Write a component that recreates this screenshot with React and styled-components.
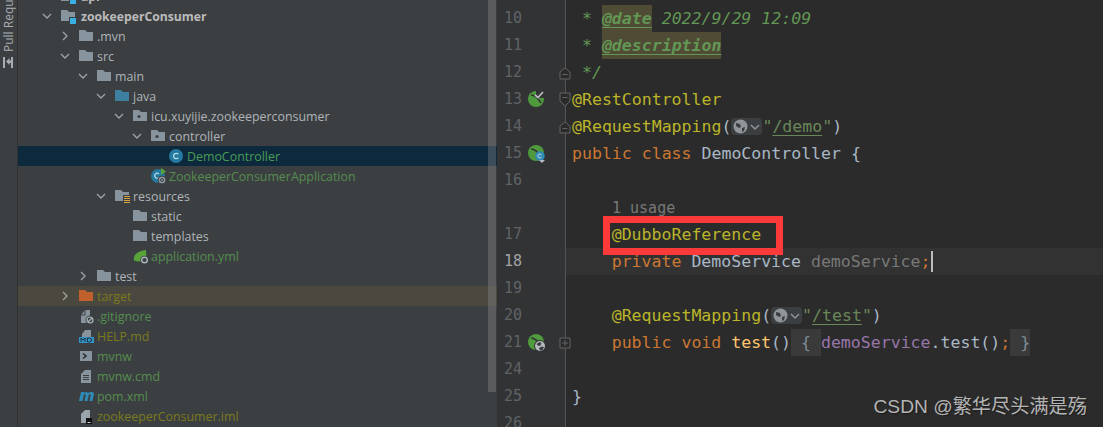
import React from 'react';
import styled, { createGlobalStyle } from 'styled-components';

const GlobalStyle = createGlobalStyle`
  html, body {
    margin: 0;
    padding: 0;
    background: #2b2b2b;
  }
`;

const Page = styled.div`
  position: relative;
  display: flex;
  width: 1103px;
  height: 427px;
  overflow: hidden;
`;

const ToolStrip = styled.div`
  flex: 0 0 17px;
  display: flex;
  justify-content: center;
  background: #3c3f41;
  border-right: 1px solid #323232;
`;

const ToolLabel = styled.div`
  display: flex;
  align-items: center;
  gap: 5px;
  height: 68px;
  margin-left: -1px;
  writing-mode: vertical-rl;
  transform: rotate(180deg);
  font-family: "Open Sans", sans-serif;
  font-size: 12px;
  white-space: nowrap;
  color: #a9adb0;
`;

const ToolIcon = styled.svg`
  flex: none;
  transform: rotate(180deg);
`;

const TreePanel = styled.div`
  position: relative;
  flex: 0 0 479px;
  margin-top: -14px;
  height: 441px;
  background: #3c3f41;
  overflow: hidden;
`;

const Row = styled.div`
  display: flex;
  align-items: center;
  height: 20px;
  padding-left: ${props => props.$left}px;
  background: ${props => props.$selected ? '#0d293e' : props.$ignored ? '#4b483f' : 'transparent'};
`;

const ChevronSlot = styled.span`
  flex: 0 0 18px;
  display: flex;
  justify-content: center;
  margin-left: -5px;
  margin-right: 5px;
`;

const IconSlot = styled.span`
  flex: 0 0 18px;
  display: flex;
  align-items: center;
  height: 20px;
`;

const RowLabel = styled.span`
  font-family: "Open Sans", sans-serif;
  font-size: ${props => props.$bold ? 12.2 : 12.4}px;
  font-weight: ${props => props.$bold ? 700 : 400};
  white-space: nowrap;
  color: ${props => props.$color};
`;

const ScrollTrack = styled.div`
  position: absolute;
  top: 0;
  right: 1px;
  width: 8px;
  height: 406px;
  background: rgba(140, 140, 140, 0.36);
`;

const Gutter = styled.div`
  position: relative;
  z-index: 1;
  flex: none;
  width: 69px;
  padding-top: 5px;
  background: #313335;
  border-left: 1px solid #323232;
  border-right: 1px solid #555555;
  box-sizing: border-box;
`;

const GutterLine = styled.div`
  display: flex;
  align-items: center;
  height: 27px;
`;

const LineNo = styled.span`
  flex: 0 0 24px;
  font-family: "DejaVu Sans Mono", monospace;
  font-size: 15px;
  line-height: 1;
  text-align: right;
  color: ${props => props.$active ? '#a4a3a3' : '#606366'};
`;

const MarkSlot = styled.span`
  flex: 0 0 20px;
  display: flex;
  justify-content: center;
  margin-left: 5px;
  margin-right: 12px;
`;

const FoldSlot = styled.span`
  flex: 0 0 12px;
  display: flex;
  justify-content: center;
`;

const Editor = styled.div`
  position: relative;
  flex: 1;
  padding-top: 5px;
  background: #2b2b2b;
  font-family: "DejaVu Sans Mono", monospace;
  font-size: 16.56px;
`;

const CodeLine = styled.div`
  display: flex;
  align-items: center;
  height: 27px;
  line-height: 27px;
  padding-left: ${props => 6 + props.$indent * 39.7}px;
  white-space: pre;
  color: #a9b7c6;
  background: ${props => props.$active ? '#323232' : 'transparent'};
`;

const Tok = styled.span`
  color: ${props => props.$c};
  font-style: ${props => props.$i ? 'italic' : 'normal'};
  font-weight: ${props => props.$b ? 700 : 400};
  text-decoration: ${props => props.$u ? 'underline' : 'none'};
  text-underline-offset: 3px;
  background: ${props => props.$bg || 'transparent'};
`;

const Folded = styled.span`
  background: #3a3a3a;
  color: #7f8a94;
`;

const InlayHint = styled.div`
  height: 27px;
  display: flex;
  align-items: center;
  padding-left: 46px;
  font-size: 15px;
  color: #787878;
`;

const GlobeChip = styled.span`
  display: inline-flex;
  align-items: center;
  justify-content: center;
  gap: 2px;
  width: 31px;
  height: 17px;
  border-radius: 4px;
  background: #3c3f41;
`;

const Caret = styled.span`
  width: 2px;
  height: 21px;
  background: #bbbbbb;
`;

const RedBox = styled.div`
  position: absolute;
  left: 37px;
  top: 216px;
  width: 166px;
  height: 25px;
  border: 7px solid #fd3a3a;
`;

const Watermark = styled.div`
  position: absolute;
  z-index: 2;
  right: 16px;
  bottom: 0;
  height: 40px;
  line-height: 40px;
  font-family: "Liberation Sans", "Noto Sans CJK SC", sans-serif;
  font-size: 19.2px;
  color: #b4b4b4;
  text-shadow: 1px 1px 1px #1c1c1c;
`;

const Chevron = ({ open }) => (
  <svg width="12" height="12" viewBox="0 0 12 12" fill="none" stroke="#a0a4a7" strokeWidth="1.3">
    {open ? <path d="M2 4l4 4 4-4" /> : <path d="M4 2l4 4-4 4" />}
  </svg>
);

const Folder = ({ color = '#88949d', dot, children }) => (
  <svg width="16" height="20" viewBox="0 0 16 20">
    <path d="M0 4h6l2 2h6v9H0z" fill={color} />
    {dot && <circle cx="6" cy="10.500" r="1.600" fill="#3c3f41" />}
    {children}
  </svg>
);

const ModuleIcon = () => (
  <svg width="20" height="20" viewBox="0 0 20 20">
    <path d="M0 4h6l2 2h6v9H0z" fill="#88949d" />
    <rect x="8" y="11" width="8" height="8" fill="#3c3f41" />
    <rect x="9" y="12" width="6" height="6" fill="#39b0e5" />
  </svg>
);

const ClassIcon = () => (
  <svg width="16" height="20" viewBox="0 0 16 20">
    <circle cx="7" cy="10" r="7" fill="#23799e" />
    <path d="M9.300 8.200a2.700 2.700 0 1 0 0 3.600" fill="none" stroke="#b6dbe9" strokeWidth="1.300" />
  </svg>
);

const BootClassIcon = () => (
  <svg width="18" height="20" viewBox="0 0 18 20">
    <circle cx="7" cy="10" r="7" fill="#23799e" />
    <path d="M8 8a2.500 2.500 0 1 0 0 3.600" fill="none" stroke="#b6dbe9" strokeWidth="1.200" />
    <path d="M10 2l5 3.500-5 3.500z" fill="#59a33b" />
    <circle cx="11" cy="14" r="4" fill="#8d9aa3" stroke="#3c3f41" />
    <circle cx="11" cy="14" r="1.500" fill="none" stroke="#3c3f41" />
  </svg>
);

const ResourcesFolder = () => (
  <Folder>
    <rect x="8" y="9" width="8" height="9" fill="#3c3f41" />
    <path d="M9 10.500h6M9 12.500h6M9 14.500h6M9 16.500h6" stroke="#d9a343" strokeWidth="1" />
  </Folder>
);

const SpringYmlIcon = () => (
  <svg width="18" height="20" viewBox="0 0 18 20">
    <path d="M1 14C0 8 6 5 13 4c0 4 1 6-1 9-3 3-8 3-12 1z" fill="#59a33b" />
    <circle cx="11.500" cy="14" r="4.200" fill="#3c3f41" />
    <circle cx="11.500" cy="14" r="2.800" fill="none" stroke="#a9b4bb" strokeWidth="1.400" />
  </svg>
);

const FileShape = ({ children }) => (
  <svg width="16" height="20" viewBox="0 0 16 20">
    <path d="M2 9l4-5h5v13H2z" fill="#88949d" />
    <path d="M6 4v5H2" fill="none" stroke="#3c3f41" />
    {children}
  </svg>
);

const GitignoreIcon = () => (
  <FileShape>
    <circle cx="11" cy="14" r="4.500" fill="#3c3f41" />
    <circle cx="11" cy="14" r="3" fill="none" stroke="#a9b4bb" strokeWidth="1.200" />
    <path d="M9 16l4-4" stroke="#a9b4bb" strokeWidth="1.200" />
  </FileShape>
);

const MarkdownIcon = () => (
  <svg width="16" height="20" viewBox="0 0 16 20">
    <path d="M3 8l3-4h6v7H3z" fill="#88949d" />
    <rect x="0" y="11" width="15" height="6" fill="#3592c4" />
    <path d="M2 16v-4l2 2 2-2v4M8.500 12v4h2l2-1v-2l-2-1z" fill="none" stroke="#17313f" strokeWidth="1" />
  </svg>
);

const ShellIcon = () => (
  <svg width="16" height="20" viewBox="0 0 16 20">
    <rect x="1" y="5" width="12" height="10" fill="#88949d" />
    <path d="M4 7.500l3 2.500-3 2.500" fill="none" stroke="#2b2d2f" strokeWidth="1.600" />
  </svg>
);

const TextFileIcon = () => (
  <svg width="16" height="20" viewBox="0 0 16 20">
    <path d="M2 8l4-4h6v13H2z" fill="#88949d" />
    <path d="M4 9.500h6M4 11.500h6M4 13.500h6" stroke="#3c3f41" />
  </svg>
);

const MavenIcon = () => (
  <svg width="18" height="20" viewBox="0 0 18 20">
    <path d="M0 15l2-9h3v1c2-1.500 3-1.500 4 0 2-1.500 6-1.500 6 1l-1.500 7h-3l1.200-6c0-1-1.200-1-1.800-.4L8.500 15h-3l1.200-6c0-1-1.200-1-1.800-.4L3.500 15z" fill="#2f8bb5" />
  </svg>
);

const ImlIcon = () => (
  <svg width="16" height="20" viewBox="0 0 16 20">
    <path d="M2 8l4-4h5v13H2z" fill="#9aa4ab" />
    <rect x="7" y="12" width="6" height="6" fill="#111111" />
    <path d="M8.500 16.500h3" stroke="#dddddd" />
  </svg>
);

const SpringMark = ({ badge }) => (
  <svg width="18" height="18" viewBox="0 0 18 18">
    <circle cx="8" cy="8" r="8" fill="#4f9a3c" />
    <path d="M3 4c3 0 7 3 10 8" fill="none" stroke="#313335" strokeWidth="1.600" />
    {badge === 'check' && (
      <>
        <rect x="8" y="0" width="10" height="7" fill="#313335" />
        <path d="M7 4l3 2.500L15 1" fill="none" stroke="#b7bdc1" strokeWidth="1.800" />
      </>
    )}
    {badge === 'class' && (
      <>
        <circle cx="12" cy="11" r="4.800" fill="#2f89b0" />
        <path d="M13.500 9.800a2 2 0 1 0 0 2.400" fill="none" stroke="#bfe0ee" />
        <path d="M11 15h6l-3 3z" fill="#b7bdc1" />
      </>
    )}
    {badge === 'globe' && (
      <>
        <circle cx="12" cy="12" r="6" fill="#313335" />
        <circle cx="12" cy="12" r="5" fill="#b4babe" />
        <path d="M8.500 10l3-2 2 1-1 2.500-2 .5zM11 14l3-1.500 2 .5-1.500 3-2.500.500z" fill="#3a3d3f" />
      </>
    )}
  </svg>
);

const FoldMark = ({ kind }) => (
  <svg width="12" height="20" viewBox="0 0 12 20" fill="none" stroke="#626466">
    {kind === 'end' && <path d="M1 9l5-4 5 4v7H1zM3.500 11.500h5" fill="#2b2b2b" />}
    {kind === 'start' && <path d="M1 3h10v8l-5 5-5-5zM3.500 7.500h5" fill="#2b2b2b" />}
    {kind === 'plus' && <path d="M1 5h10v10H1zM3 10h6M6 7v6" fill="#2b2b2b" />}
  </svg>
);

const Globe = () => (
  <svg width="15" height="15" viewBox="0 0 15 15">
    <circle cx="7.500" cy="7.500" r="7" fill="#8f9599" />
    <path d="M3 4l4 1 1 3-2 1-3-2zM9 9l3-1-1 4-2 1z" fill="#3c3f41" />
  </svg>
);

const GlobeMapping = () => (
  <GlobeChip>
    <Globe />
    <svg width="10" height="10" viewBox="0 0 10 10" fill="none" stroke="#8f9599" strokeWidth="1.500">
      <path d="M1 3l4 4 4-4" />
    </svg>
  </GlobeChip>
);

const GREEN = '#629755';
const YELLOW = '#bbb529';
const ORANGE = '#cc7832';
const GRAY = '#a9b7c6';
const STRING = '#6a8759';
const TAG_BG = '#4f4b34';
const PLAIN = '#aeb4b9';
const VCS_NEW = '#548d4f';
const VCS_IGNORED = '#7a7a1c';

const treeRows = [
  { left: 43, icon: <ModuleIcon />, label: 'api', color: '#bbbbbb', bold: true },
  { left: 25, chevron: 'open', icon: <ModuleIcon />, label: 'zookeeperConsumer', color: '#bbbbbb', bold: true },
  { left: 43, chevron: 'closed', icon: <Folder />, label: '.mvn', color: PLAIN },
  { left: 43, chevron: 'open', icon: <Folder />, label: 'src', color: PLAIN },
  { left: 61, chevron: 'open', icon: <Folder />, label: 'main', color: PLAIN },
  { left: 79, chevron: 'open', icon: <Folder color="#3d7f9f" />, label: 'java', color: PLAIN },
  { left: 97, chevron: 'open', icon: <Folder dot />, label: 'icu.xuyijie.zookeeperconsumer', color: PLAIN },
  { left: 115, chevron: 'open', icon: <Folder dot />, label: 'controller', color: PLAIN },
  { left: 151, icon: <ClassIcon />, label: 'DemoController', color: '#499c54', selected: true },
  { left: 133, icon: <BootClassIcon />, label: 'ZookeeperConsumerApplication', color: VCS_NEW },
  { left: 79, chevron: 'open', icon: <ResourcesFolder />, label: 'resources', color: PLAIN },
  { left: 115, icon: <Folder />, label: 'static', color: PLAIN },
  { left: 115, icon: <Folder />, label: 'templates', color: PLAIN },
  { left: 115, icon: <SpringYmlIcon />, label: 'application.yml', color: VCS_NEW },
  { left: 61, chevron: 'closed', icon: <Folder />, label: 'test', color: PLAIN },
  { left: 43, chevron: 'closed', icon: <Folder color="#c0602c" />, label: 'target', color: VCS_IGNORED, ignored: true },
  { left: 61, icon: <GitignoreIcon />, label: '.gitignore', color: VCS_NEW },
  { left: 61, icon: <MarkdownIcon />, label: 'HELP.md', color: VCS_IGNORED },
  { left: 61, icon: <ShellIcon />, label: 'mvnw', color: VCS_NEW },
  { left: 61, icon: <TextFileIcon />, label: 'mvnw.cmd', color: VCS_NEW },
  { left: 61, icon: <MavenIcon />, label: 'pom.xml', color: VCS_NEW },
  { left: 61, icon: <ImlIcon />, label: 'zookeeperConsumer.iml', color: VCS_IGNORED },
];

const gutterLines = [
  { n: 10 },
  { n: 11 },
  { n: 12, fold: 'end' },
  { n: 13, mark: 'check', fold: 'start' },
  { n: 14, fold: 'end' },
  { n: 15, mark: 'class' },
  { n: 16 },
  { hint: true },
  { n: 17 },
  { n: 18, active: true },
  { n: 19 },
  { n: 20 },
  { n: 21, mark: 'globe', fold: 'plus' },
  { n: 24 },
  { n: 25 },
  { n: 26 },
];

export default function App() {
  return (
    <Page>
      <GlobalStyle />
      <ToolStrip>
        <ToolLabel>
          <ToolIcon width="11" height="11" viewBox="0 0 11 11">
            <path d="M0 0h2v11H0zM3 4.500L6.500 1v2.500H8V0h2v11H8V6H6.500v2z" fill="#a9adb0" />
          </ToolIcon>
          Pull Requests
        </ToolLabel>
      </ToolStrip>
      <TreePanel>
        {treeRows.map(row => (
          <Row key={row.label} $left={row.left} $selected={row.selected} $ignored={row.ignored}>
            {row.chevron && <ChevronSlot><Chevron open={row.chevron === 'open'} /></ChevronSlot>}
            <IconSlot>{row.icon}</IconSlot>
            <RowLabel $color={row.color} $bold={row.bold}>{row.label}</RowLabel>
          </Row>
        ))}
        <ScrollTrack />
      </TreePanel>
      <Gutter>
        {gutterLines.map((line, i) => (
          <GutterLine key={i}>
            <LineNo $active={line.active}>{line.n}</LineNo>
            <MarkSlot>{line.mark && <SpringMark badge={line.mark} />}</MarkSlot>
            <FoldSlot>{line.fold && <FoldMark kind={line.fold} />}</FoldSlot>
          </GutterLine>
        ))}
      </Gutter>
      <Editor>
        <CodeLine $indent={0}>
          <Tok $c={GREEN} $i> * </Tok>
          <Tok $c={GREEN} $i $b $u $bg={TAG_BG}>@date</Tok>
          <Tok $c={GREEN} $i> 2022/9/29 12:09</Tok>
        </CodeLine>
        <CodeLine $indent={0}>
          <Tok $c={GREEN} $i> * </Tok>
          <Tok $c={GREEN} $i $b $u $bg={TAG_BG}>@description</Tok>
        </CodeLine>
        <CodeLine $indent={0}><Tok $c={GREEN} $i> */</Tok></CodeLine>
        <CodeLine $indent={0}><Tok $c={YELLOW}>@RestController</Tok></CodeLine>
        <CodeLine $indent={0}>
          <Tok $c={YELLOW}>@RequestMapping</Tok>
          <Tok $c={GRAY}>(</Tok>
          <GlobeMapping />
          <Tok $c={STRING}>"</Tok>
          <Tok $c={STRING} $u>/demo</Tok>
          <Tok $c={STRING}>"</Tok>
          <Tok $c={GRAY}>)</Tok>
        </CodeLine>
        <CodeLine $indent={0}>
          <Tok $c={ORANGE}>public class </Tok>
          <Tok $c={GRAY}>DemoController {'{'}</Tok>
        </CodeLine>
        <CodeLine $indent={0} />
        <InlayHint>1 usage</InlayHint>
        <CodeLine $indent={1}><Tok $c={YELLOW}>@DubboReference</Tok></CodeLine>
        <CodeLine $indent={1} $active>
          <Tok $c={ORANGE}>private </Tok>
          <Tok $c={GRAY}>DemoService </Tok>
          <Tok $c="#787878">demoService</Tok>
          <Tok $c={ORANGE}>;</Tok>
          <Caret />
        </CodeLine>
        <CodeLine $indent={0} />
        <CodeLine $indent={1}>
          <Tok $c={YELLOW}>@RequestMapping</Tok>
          <Tok $c={GRAY}>(</Tok>
          <GlobeMapping />
          <Tok $c={STRING}>"</Tok>
          <Tok $c={STRING} $u>/test</Tok>
          <Tok $c={STRING}>"</Tok>
          <Tok $c={GRAY}>)</Tok>
        </CodeLine>
        <CodeLine $indent={1}>
          <Tok $c={ORANGE}>public void </Tok>
          <Tok $c="#ffc66d">test</Tok>
          <Tok $c={GRAY}>()</Tok>
          <Folded> {'{'} </Folded>
          <Tok $c="#9876aa">demoService</Tok>
          <Tok $c={GRAY}>.test()</Tok>
          <Tok $c={ORANGE}>;</Tok>
          <Folded> {'}'}</Folded>
        </CodeLine>
        <CodeLine $indent={0} />
        <CodeLine $indent={0}>{'}'}</CodeLine>
        <RedBox />
      </Editor>
      <Watermark>CSDN @繁华尽头满是殇</Watermark>
    </Page>
  );
}
